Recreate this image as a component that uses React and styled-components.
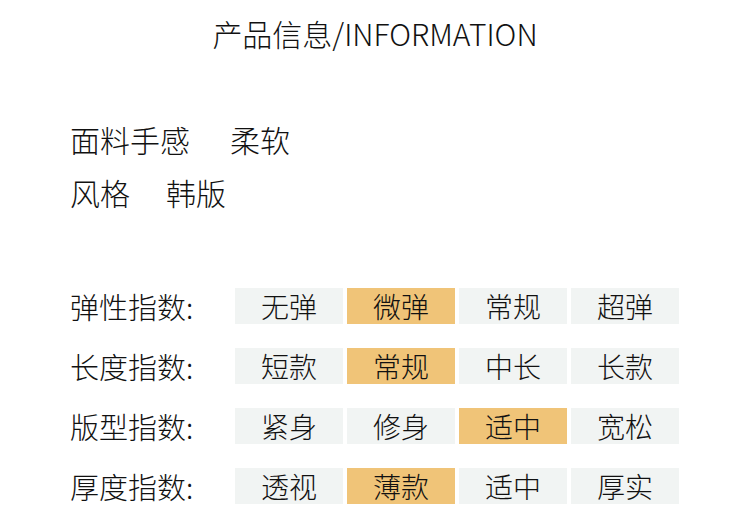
import React from "react";
import styled, { createGlobalStyle } from "styled-components";

const Global = createGlobalStyle`
  html, body { margin: 0; padding: 0; background: #ffffff; }
  body { font-family: "Noto Sans CJK SC", "Noto Sans", sans-serif; color: #111111; font-weight: 300; }
`;

const Page = styled.div`
  width: 750px;
  height: 532px;
  box-sizing: border-box;
  padding: 12px 0 0 70px;
  overflow: hidden;
`;

const Title = styled.h1`
  margin: 0 0 0 -70px;
  font-size: 30px;
  font-weight: 300;
  line-height: 42px;
  text-align: center;
`;

const Specs = styled.div`
  margin-top: 59px;
  display: flex;
  flex-direction: column;
`;

const SpecLine = styled.div`
  display: flex;
  font-size: 30px;
  line-height: 53px;
`;

const SpecValue = styled.span`
  margin-left: ${(p) => p.$gap}px;
`;

const Indexes = styled.div`
  margin-top: 69px;
  display: flex;
  flex-direction: column;
  gap: 24px;
`;

const IndexRow = styled.div`
  display: grid;
  grid-template-columns: 161px repeat(4, 108px);
  column-gap: 4px;
  align-items: center;
  height: 36px;
`;

const Label = styled.div`
  font-size: 29px;
  line-height: 36px;
  white-space: nowrap;
`;

const Option = styled.div`
  height: 36px;
  display: flex;
  align-items: center;
  justify-content: center;
  font-size: 28px;
  line-height: 36px;
  background: ${(p) => (p.$active ? "#f0c478" : "#f1f4f3")};
`;

const rows = [
  { label: "弹性指数:", options: ["无弹", "微弹", "常规", "超弹"], active: 1 },
  { label: "长度指数:", options: ["短款", "常规", "中长", "长款"], active: 1 },
  { label: "版型指数:", options: ["紧身", "修身", "适中", "宽松"], active: 2 },
  { label: "厚度指数:", options: ["透视", "薄款", "适中", "厚实"], active: 1 },
];

export default function App() {
  return (
    <>
      <Global />
      <Page>
        <Title>产品信息/INFORMATION</Title>
        <Specs>
          <SpecLine>
            面料手感<SpecValue $gap={40}>柔软</SpecValue>
          </SpecLine>
          <SpecLine>
            风格<SpecValue $gap={36}>韩版</SpecValue>
          </SpecLine>
        </Specs>
        <Indexes>
          {rows.map((r) => (
            <IndexRow key={r.label}>
              <Label>{r.label}</Label>
              {r.options.map((o, i) => (
                <Option key={o + i} $active={i === r.active}>
                  {o}
                </Option>
              ))}
            </IndexRow>
          ))}
        </Indexes>
      </Page>
    </>
  );
}
